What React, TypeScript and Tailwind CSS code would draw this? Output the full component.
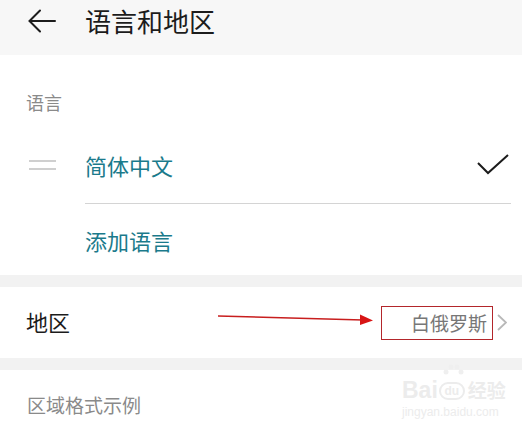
import React from 'react';

const FONT = { fontFamily: '"Noto Sans CJK SC", "Noto Sans", sans-serif' };

function BackArrow() {
  return (
    <svg width="28" height="24" viewBox="0 0 28 24" fill="none" stroke="#1c1c1c" strokeWidth="2" strokeLinecap="round">
      <path d="M27 12H2" />
      <path d="M12 1.5L1.5 12L12 22.5" />
    </svg>
  );
}

function Watermark() {
  return (
    <div className="absolute left-[402px] top-[376px] flex flex-col items-start text-[#ececec] pointer-events-none">
      <div className="flex items-end gap-[1px]">
        <span className="text-[23px] leading-[20px] font-bold" style={{ fontFamily: '"Liberation Sans", sans-serif' }}>Bai</span>
        <span className="relative">
          <svg width="26" height="28" viewBox="0 0 26 28" fill="#efefef" className="absolute -top-[14px] left-[1px]">
            <circle cx="6" cy="10" r="2.5" />
            <circle cx="11" cy="5" r="2.5" />
            <circle cx="17" cy="5" r="2.5" />
            <circle cx="21" cy="10" r="2.5" />
          </svg>
          <span className="inline-flex items-center justify-center w-[26px] h-[18px] rounded-full border-2 border-[#ececec] text-[12px] leading-none font-bold" style={{ fontFamily: '"Liberation Sans", sans-serif' }}>du</span>
        </span>
        <span className="text-[19px] leading-[20px] font-bold ml-[2px]" style={FONT}>经验</span>
      </div>
      <span className="text-[12px] leading-[14px] mt-[5px]" style={{ fontFamily: '"Liberation Sans", sans-serif' }}>jingyan.baidu.com</span>
    </div>
  );
}

export default function App() {
  return (
    <div className="relative w-[522px] h-[437px] bg-white overflow-hidden" style={FONT}>
      <header className="h-[55px] bg-[#f7f7f7] flex items-center pb-[13px]">
        <div className="ml-[28px] w-[57px]">
          <BackArrow />
        </div>
        <h1 className="text-[26px] leading-[26px] text-[#1c1c1c]">语言和地区</h1>
      </header>

      <section>
        <div className="h-[75px] pt-[38px] pl-[26px] text-[18px] leading-[18px] text-[#8a8a8a]">语言</div>
        <div className="h-[73px] flex items-center">
          <div className="w-[85px] pl-[29px] flex flex-col gap-[6px] -mt-[4px]">
            <div className="w-[27px] h-[2px] bg-[#cfcfcf]" />
            <div className="w-[27px] h-[2px] bg-[#cfcfcf]" />
          </div>
          <span className="flex-1 text-[22px] leading-[22px] text-[#1b7a8b] -mt-[4px]">简体中文</span>
          <svg width="32" height="22" viewBox="0 0 32 22" fill="none" stroke="#1c1c1c" strokeWidth="2" className="mr-[13px] -mt-[4px]">
            <path d="M1 9L11 19L31 1" />
          </svg>
        </div>
        <div className="h-px bg-[#d4d4d4] ml-[85px] mr-[11px]" />
        <div className="h-[71px] flex items-center pl-[85px]">
          <span className="text-[22px] leading-[22px] text-[#1b7a8b]">添加语言</span>
        </div>
      </section>

      <div className="h-[12px] bg-[#f2f2f2]" />

      <div className="relative h-[71px] flex items-center pl-[26px] pr-[15px]">
        <span className="flex-1 text-[22px] leading-[22px] text-[#1c1c1c] -mt-[3px]">地区</span>
        <div className="w-[112px] h-[34px] border border-[#b3262b] flex items-center justify-end pr-[5px] mt-[1px]">
          <span className="text-[19px] leading-[19px] text-[#777777] -mt-[2px]">白俄罗斯</span>
        </div>
        <svg width="10" height="17" viewBox="0 0 10 17" fill="none" stroke="#b8b8b8" strokeWidth="1.8" className="ml-[4px]">
          <path d="M1 1L9 8.5L1 16" />
        </svg>
        <svg width="160" height="16" viewBox="0 0 160 16" className="absolute left-[216px] top-[22px]">
          <path d="M2 7L147 11" stroke="#c81e1e" strokeWidth="1.5" />
          <path d="M144 5.5L157 11.5L144 16Z" fill="#d81515" />
        </svg>
      </div>

      <div className="h-[12px] bg-[#f2f2f2]" />

      <div className="pt-[25px] pl-[27px] text-[19px] leading-[19px] text-[#8a8a8a]">区域格式示例</div>

      <Watermark />
    </div>
  );
}
